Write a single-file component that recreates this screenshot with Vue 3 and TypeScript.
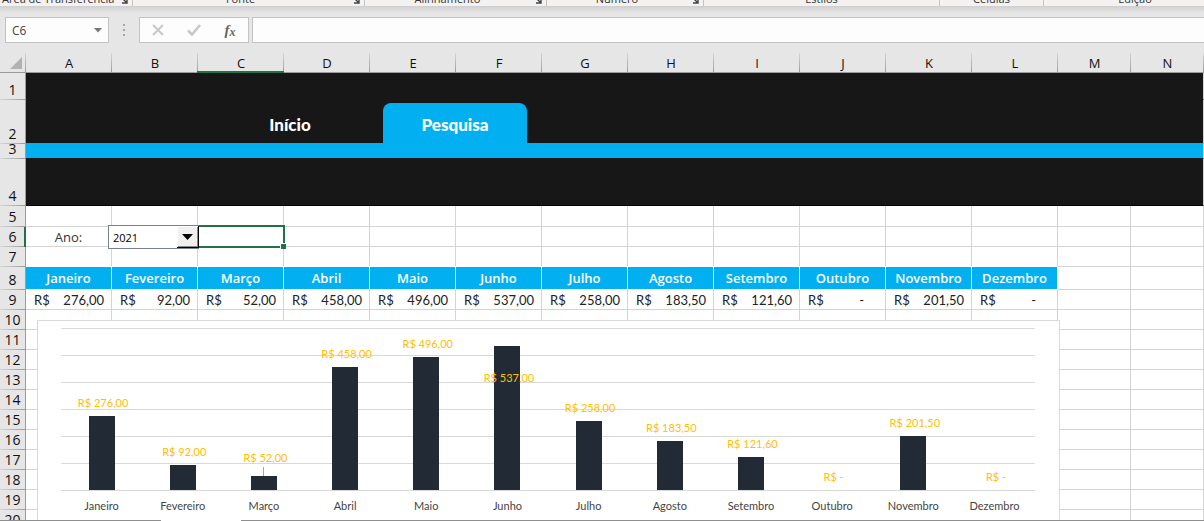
<script setup lang="ts">
import { ref } from 'vue'

interface RibbonGroup {
  label: string
  launcher: boolean
}

interface Month {
  name: string
  value: number
  lift?: number
  leader?: boolean
}

const groups: RibbonGroup[] = [
  { label: 'Área de Transferência', launcher: true },
  { label: 'Fonte', launcher: true },
  { label: 'Alinhamento', launcher: true },
  { label: 'Número', launcher: true },
  { label: 'Estilos', launcher: false },
  { label: 'Células', launcher: false },
  { label: 'Edição', launcher: false },
]

const columns: string[] = 'ABCDEFGHIJKLMN'.split('')

const months: Month[] = [
  { name: 'Janeiro', value: 276 },
  { name: 'Fevereiro', value: 92 },
  { name: 'Março', value: 52, lift: 10, leader: true },
  { name: 'Abril', value: 458 },
  { name: 'Maio', value: 496 },
  { name: 'Junho', value: 537, lift: -40 },
  { name: 'Julho', value: 258 },
  { name: 'Agosto', value: 183.5 },
  { name: 'Setembro', value: 121.6 },
  { name: 'Outubro', value: 0 },
  { name: 'Novembro', value: 201.5 },
  { name: 'Dezembro', value: 0 },
]

const axisMax = 600
const emptyRows: number[] = Array.from({ length: 31 }, (_, i) => i + 10)

const year = ref('2021')
const cellName = ref('C6')
const formula = ref('')

function amount(value: number): string {
  return value === 0 ? '-' : value.toFixed(2).replace('.', ',')
}
</script>

<template>
  <div class="app">
    <div class="ribbon">
      <div v-for="g in groups" :key="g.label" class="group">
        <span class="group-label">{{ g.label }}</span>
        <button v-if="g.launcher" class="launcher" type="button" :aria-label="g.label">
          <svg width="7" height="7" viewBox="0 0 7 7"><path d="M2 2l4 4M6 2v4H1" fill="none" stroke="#444" stroke-width="1.4" /></svg>
        </button>
      </div>
    </div>

    <div class="formula-bar">
      <div class="name-box">
        <input v-model="cellName" aria-label="Caixa de nome" />
        <svg width="8" height="5" viewBox="0 0 8 5"><path d="M0 0h8L4 4.5z" fill="#777" /></svg>
      </div>
      <svg class="dots" width="2" height="12" viewBox="0 0 2 12"><path d="M0 0h2v2H0zM0 5h2v2H0zM0 10h2v2H0z" fill="#a6a6a6" /></svg>
      <div class="actions">
        <button type="button" aria-label="Cancelar">
          <svg width="12" height="12" viewBox="0 0 12 12"><path d="M1 1l10 10M11 1L1 11" fill="none" stroke="#c8c8c8" stroke-width="2" /></svg>
        </button>
        <button type="button" aria-label="Inserir">
          <svg width="14" height="12" viewBox="0 0 14 12"><path d="M1 6.5l4 4L13 1" fill="none" stroke="#c8c8c8" stroke-width="2.6" /></svg>
        </button>
        <button type="button" class="fx" aria-label="Inserir função"><i>f</i><i class="sub">x</i></button>
      </div>
      <input v-model="formula" class="formula" aria-label="Barra de fórmulas" />
    </div>

    <main class="sheet">
      <table>
        <thead>
          <tr class="cols">
            <th class="corner" aria-label="Selecionar tudo">
              <svg width="12" height="12" viewBox="0 0 12 12"><path d="M12 0v12H0z" fill="#b2b2b2" /></svg>
            </th>
            <th v-for="c in columns" :key="c" scope="col" :class="{ active: c === 'C' }">{{ c }}</th>
          </tr>
        </thead>
        <tbody>
          <tr class="r1">
            <th scope="row">1</th>
            <td class="dark" colspan="14"></td>
          </tr>
          <tr class="r2">
            <th scope="row">2</th>
            <td class="dark above-band" colspan="14">
              <nav class="tabs">
                <a href="#inicio">Início</a>
                <a href="#pesquisa" class="current">Pesquisa</a>
              </nav>
            </td>
          </tr>
          <tr class="r3">
            <th scope="row">3</th>
            <td class="dark band" colspan="14"></td>
          </tr>
          <tr class="r4">
            <th scope="row">4</th>
            <td class="dark last" colspan="14"></td>
          </tr>
          <tr class="r5">
            <th scope="row">5</th>
            <td v-for="c in columns" :key="c"></td>
          </tr>
          <tr>
            <th scope="row" class="active">6</th>
            <td class="ano"><label for="ano">Ano:</label></td>
            <td class="picker-cell">
              <div class="picker">
                <select id="ano" v-model="year">
                  <option>2020</option>
                  <option>2021</option>
                  <option>2022</option>
                </select>
                <span class="drop">
                  <svg width="11" height="6" viewBox="0 0 11 6"><path d="M0 0h11L5.5 6z" fill="#000" /></svg>
                </span>
              </div>
            </td>
            <td class="selected"></td>
            <td v-for="c in columns.slice(3)" :key="c"></td>
          </tr>
          <tr>
            <th scope="row">7</th>
            <td v-for="(c, i) in columns" :key="c" :class="{ 'above-head': i < 12 }"></td>
          </tr>
          <tr class="r8">
            <th scope="row">8</th>
            <td v-for="m in months" :key="m.name" class="month">{{ m.name }}</td>
            <td></td>
            <td></td>
          </tr>
          <tr>
            <th scope="row">9</th>
            <td v-for="m in months" :key="m.name" class="money" :class="{ zero: m.value === 0 }">
              <span>R$</span><span>{{ amount(m.value) }}</span>
            </td>
            <td></td>
            <td></td>
          </tr>
          <tr v-for="n in emptyRows" :key="n">
            <th scope="row">{{ n }}</th>
            <td v-for="c in columns" :key="c"></td>
          </tr>
        </tbody>
      </table>

      <div class="float-layer">
        <section class="chart" aria-label="Valores por mês">
          <div class="plot">
            <div class="lines"><span v-for="n in 7" :key="n"></span></div>
            <div class="bars">
              <div v-for="m in months" :key="m.name" class="slot">
                <div class="bar" :style="{ height: (m.value / axisMax) * 100 + '%' }">
                  <span v-if="m.leader" class="leader"></span>
                  <span class="value" :style="{ bottom: `calc(100% + ${m.lift ?? 5}px)` }">R$ {{ amount(m.value) }}</span>
                </div>
              </div>
            </div>
          </div>
          <div class="axis"><span v-for="m in months" :key="m.name">{{ m.name }}</span></div>
        </section>
      </div>
    </main>
    <footer class="sheet-tabs"><span></span></footer>
  </div>
</template>

<style>
body {
  margin: 0;
}
</style>

<style scoped>
* {
  box-sizing: border-box;
}
.app {
  --track: 26px repeat(12, minmax(0, 86fr)) minmax(0, 73fr) minmax(0, 73fr);
  --blue: #02b0f2;
  --line: #d4d4d4;
  --green: #217346;
  display: flex;
  flex-direction: column;
  height: 100vh;
  overflow: hidden;
  background: #e6e6e6;
  font-family: "Open Sans", "Noto Sans", sans-serif;
  font-size: 13px;
  color: #222;
}
button,
input,
select {
  font: inherit;
  color: inherit;
  border: 0;
  padding: 0;
  margin: 0;
  background: none;
  outline: none;
  min-width: 0;
}

/* ribbon */
.ribbon {
  flex: none;
  display: grid;
  grid-template-columns: 133fr 232fr 182fr 157fr 236fr 104fr 160fr;
  height: 6px;
  background: #f3f2f1;
  overflow: hidden;
}
.group {
  display: flex;
  align-items: flex-end;
  min-width: 0;
  height: 6px;
  border-right: 1px solid #c6c4c2;
}
.group:last-child {
  padding-left: 22px;
  border-right: 0;
}
.group-label {
  flex: 1;
  text-align: center;
  font-size: 11px;
  line-height: 14px;
  white-space: nowrap;
  color: #333;
}
.launcher {
  display: flex;
  width: 11px;
  height: 11px;
  margin-left: 5px;
  align-items: center;
}
.group:first-child .group-label {
  text-align: left;
  padding-left: 2px;
}
.group:first-child .launcher {
  margin-left: 0;
}

/* formula bar */
.formula-bar {
  flex: none;
  display: flex;
  align-items: center;
  height: 47px;
  padding: 1px 0 0 5px;
  background: linear-gradient(#cfcfcf, #e6e6e6 7px);
}
.name-box,
.actions,
.formula {
  height: 26px;
  border: 1px solid #c3c3c3;
  background: #fdfdfd;
}
.name-box {
  display: flex;
  align-items: center;
  width: 104px;
  padding: 0 6px;
}
.name-box input {
  flex: 1;
  font-size: 12px;
  color: #444;
}
.dots {
  margin: 0 14px;
}
.actions {
  display: flex;
  width: 110px;
  margin-right: 3px;
}
.actions button {
  flex: 1;
  display: flex;
  align-items: center;
  justify-content: center;
}
.actions .fx {
  font-family: "Liberation Serif", serif;
  font-size: 15px;
  font-weight: 700;
  line-height: 18px;
  color: #666;
}
.fx .sub {
  padding-top: 4px;
  font-size: 12px;
}
.formula {
  flex: 1;
  border-right: 0;
  padding: 0 6px;
}

/* sheet */
.sheet {
  position: relative;
  flex: 1;
  min-height: 0;
  overflow: hidden;
  background: #fff;
}
table,
thead,
tbody {
  display: block;
}
tr {
  display: grid;
  grid-template-columns: var(--track);
  height: 20px;
}
th,
td {
  position: relative;
  display: flex;
  padding: 0;
  min-width: 0;
}
td {
  border-right: 1px solid var(--line);
  border-bottom: 1px solid var(--line);
}
th {
  font-size: 14px;
  font-weight: 400;
  color: #111;
  background: #e6e6e6;
}
.cols th {
  align-items: center;
  justify-content: center;
  border-bottom: 1px solid #9b9b9b;
  font-size: 13px;
  background: linear-gradient(#d6d6d6, #9b9b9b) right / 1px 100% no-repeat #e6e6e6;
}
.cols .corner {
  padding: 1px 0 0 6px;
}
.cols .active::after {
  content: "";
  position: absolute;
  inset: auto 0 -1px -1px;
  height: 2px;
  background: var(--green);
}
tbody th {
  align-items: flex-end;
  justify-content: center;
  overflow: hidden;
  border-right: 1px solid #9b9b9b;
  line-height: 20px;
  background: linear-gradient(90deg, #d6d6d6, #9b9b9b) bottom / 100% 1px no-repeat #e6e6e6;
}
tbody th.active::after {
  content: "";
  position: absolute;
  inset: 0 0 0 auto;
  width: 1px;
  background: var(--green);
}
tbody th.active {
  border-right-color: var(--green);
}
.r1 {
  height: 27px;
}
.r2 {
  height: 44px;
}
.r3 {
  height: 15px;
}
.r4 {
  height: 47px;
}
.r5 {
  height: 21px;
}
.r8 {
  height: 23px;
}
.dark {
  grid-column: 2 / -1;
  background: #171717;
  border-bottom-color: #171717;
}
.dark.above-band {
  border-bottom-color: var(--blue);
}
.dark.band {
  background: var(--blue);
  border-bottom-color: #171717;
}
.dark.last {
  border-bottom-color: #000;
}
.tabs {
  display: flex;
  align-items: flex-end;
  gap: 21px;
  padding-left: 192px;
}
.tabs a {
  width: 144px;
  height: 40px;
  border-radius: 8px 8px 0 0;
  font-family: Lato, sans-serif;
  font-size: 17px;
  font-weight: 900;
  line-height: 44px;
  text-align: center;
  text-decoration: none;
  color: #fff;
}
.tabs .current {
  background: var(--blue);
}
.ano {
  align-items: center;
  justify-content: center;
  color: #333;
}
.picker {
  position: absolute;
  z-index: 2;
  inset: -2px -2px -3px -4px;
  display: flex;
  border: 1px solid #7b818c;
  background: #fff;
}
.picker select {
  width: 100%;
  appearance: none;
  padding-left: 4px;
  font-size: 11px;
  color: #000;
}
.drop {
  position: absolute;
  inset: 0 -1px 0 auto;
  display: flex;
  align-items: center;
  justify-content: center;
  width: 22px;
  border: solid #000;
  border-width: 0 1px 1px 0;
  background: #f0f0f0;
  box-shadow: inset 1px 1px #fff, inset -1px -1px #8a8a8a;
  pointer-events: none;
}
.selected::before {
  content: "";
  position: absolute;
  z-index: 1;
  inset: -2px -2px -2px -1px;
  border: 2px solid var(--green);
}
.selected::after {
  content: "";
  position: absolute;
  z-index: 1;
  right: -3px;
  bottom: -3px;
  width: 5px;
  height: 5px;
  background: var(--green);
  box-shadow: -1px -1px #fff, -1px 0 #fff, 0 -1px #fff;
}
.above-head {
  border-bottom-color: #fff;
}
.month {
  align-items: center;
  justify-content: center;
  border-color: #fff;
  background: var(--blue);
  font-weight: 600;
  color: #fff;
}
.money {
  align-items: center;
  justify-content: space-between;
  padding: 1px 7px 0 8px;
  font-family: Lato, sans-serif;
}
.money.zero {
  padding-right: 21px;
}

/* chart */
.float-layer {
  position: absolute;
  inset: 267px 0 auto 0;
  display: grid;
  grid-template-columns: var(--track);
}
.chart {
  grid-column: 2 / 14;
  margin: 0 -2px 0 11px;
  padding: 7px 24px 12px 23px;
  border: 1px solid #d9d9d9;
  background: #fff;
  font-family: Lato, sans-serif;
  font-size: 11px;
  line-height: 16px;
}
.plot {
  position: relative;
  height: 163px;
  padding: 1px 0;
}
.lines {
  position: absolute;
  inset: 0;
  display: flex;
  flex-direction: column;
  justify-content: space-between;
}
.lines span {
  height: 1px;
  background: #d9d9d9;
}
.bars {
  position: relative;
  display: flex;
  height: 100%;
}
.slot {
  flex: 1;
  display: flex;
  align-items: flex-end;
  justify-content: center;
}
.bar {
  position: relative;
  display: flex;
  justify-content: center;
  width: 26px;
  background: #222a35;
}
.value {
  position: absolute;
  padding-left: 3px;
  white-space: nowrap;
  color: #ffc000;
}
.leader {
  position: absolute;
  bottom: 100%;
  width: 1px;
  height: 9px;
  background: #a6a6a6;
}
.axis {
  display: flex;
  margin-top: 7px;
  color: #444;
}
.axis span {
  flex: 1;
  text-align: center;
}

.sheet-tabs {
  flex: none;
  height: 1px;
  padding-left: 161px;
  background: #8f8f8f;
}
.sheet-tabs span {
  display: block;
  width: 80px;
  height: 1px;
  background: #fff;
}
</style>
